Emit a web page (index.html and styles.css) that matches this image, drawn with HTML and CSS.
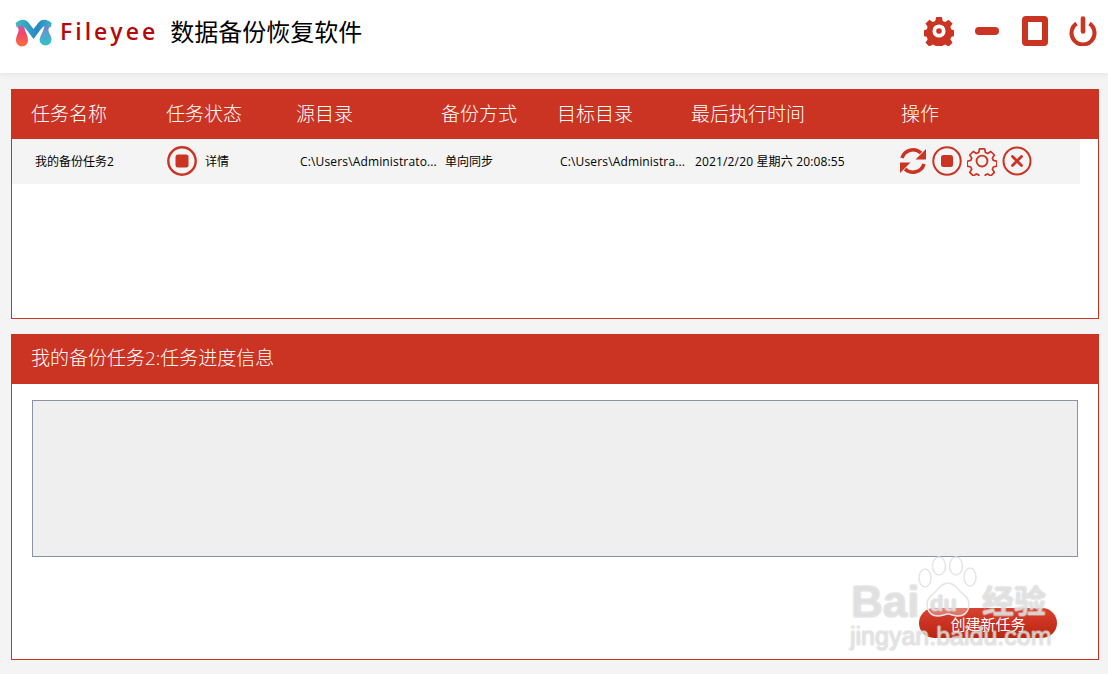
FILE: index.html
```html
<!DOCTYPE html>
<html lang="zh-CN">
<head>
<meta charset="utf-8">
<title>Fileyee 数据备份恢复软件</title>
<link rel="stylesheet" href="styles.css">
</head>
<body>
<header class="topbar">
  <div class="brand">
    <svg class="logo" width="38" height="29" viewBox="0 0 38 29">
      <defs>
        <linearGradient id="lg1" x1="0" y1="0" x2="0" y2="1"><stop offset="0" stop-color="#c85bc0"/><stop offset=".5" stop-color="#f0466e"/><stop offset="1" stop-color="#fd7035"/></linearGradient>
        <linearGradient id="lg2" x1="0" y1="0" x2="0" y2="1"><stop offset="0" stop-color="#9a62c8"/><stop offset=".45" stop-color="#5f9ad0"/><stop offset="1" stop-color="#2cc6c2"/></linearGradient>
        <linearGradient id="lg3" x1="0" y1="0" x2="1" y2="0"><stop offset="0" stop-color="#38c0c4"/><stop offset=".6" stop-color="#2a86c4"/><stop offset="1" stop-color="#3db5c8"/></linearGradient>
      </defs>
      <path d="M.5 5 6 3 9.500 10C10 14 13 17 13 22.500A6 6 0 0 1 1 22.500C1 17 4 15 3.500 11Z" fill="url(#lg1)"/>
      <path d="M36.500 5 31 3 29 10C28 14 25.500 17 24.500 21.500A6 6 0 0 0 36.500 21.500C36.500 17 33 15 33.500 11Z" fill="url(#lg2)"/>
      <path d="M1 5C5 1 10 1 13 4L18.500 11 24 4C27 1 32 1 36.500 5L36 9.500C32 6.500 29 7.500 26 11L18.500 21 11 11C8 7.500 5 6.500 1.500 9.500Z" fill="url(#lg3)"/>
    </svg>
    <span class="brand-name">Fileyee</span>
    <h1 class="brand-title">数据备份恢复软件</h1>
  </div>
  <div class="win-actions">
    <svg class="win-icon" width="30" height="30" viewBox="0 0 32 32"><path fill="#cb3322" fill-rule="evenodd" d="M13 1h6l1 4.200 2.600 1.100 3.700-2.300 4.100 4.100-2.300 3.700 1.100 2.600 4.200 1v5.800l-4.200 1-1.100 2.600 2.300 3.700-4.100 4.100-3.700-2.300-2.600 1.100-1 4.200h-6l-1-4.200-2.600-1.100-3.700 2.300-4.100-4.100 2.300-3.700-1.100-2.600-4.200-1v-5.800l4.200-1 1.100-2.600-2.300-3.700 4.100-4.100 3.700 2.300L12 5.200zM16 9a7 7 0 1 0 0 14 7 7 0 0 0 0-14zM16 13a3 3 0 1 1 0 6 3 3 0 0 1 0-6z"/></svg>
    <span class="win-min"></span>
    <span class="win-max"></span>
    <svg class="win-icon" width="28" height="30" viewBox="0 0 28 30"><path d="M7.500 7.500A11.500 11.500 0 1 0 20.500 7.500" fill="none" stroke="#cb3322" stroke-width="4"/><path d="M14 2.500v13" stroke="#cb3322" stroke-width="4.600" stroke-linecap="round"/></svg>
  </div>
</header>

<main class="content">
  <section class="panel panel-tasks">
    <div class="grid-row panel-head table-head">
      <div>任务名称</div><div>任务状态</div><div>源目录</div><div>备份方式</div><div>目标目录</div><div>最后执行时间</div><div>操作</div>
    </div>
    <div class="grid-row task-row">
      <div class="cell">我的备份任务2</div>
      <div class="cell status">
        <svg width="30" height="30" viewBox="0 0 30 30"><circle cx="15" cy="15" r="13.700" fill="none" stroke="#cb3322" stroke-width="2.400"/><rect x="8.500" y="8.500" width="13" height="13" rx="2.500" fill="#cb3322"/></svg>
        <span>详情</span>
      </div>
      <div class="cell clip wide">C:\Users\Administrato...</div>
      <div class="cell">单向同步</div>
      <div class="cell clip wide">C:\Users\Administra...</div>
      <div class="cell wide">2021/2/20 星期六 20:08:55</div>
      <div class="cell ops">
        <svg width="28" height="30" viewBox="0 0 28 30"><path d="M3 12 A11.500 11.500 0 0 1 22 7" fill="none" stroke="#cb3322" stroke-width="3.600"/><path d="M27 3v10.500H16.500z" fill="#cb3322"/><path d="M25 18 A11.500 11.500 0 0 1 6 23" fill="none" stroke="#cb3322" stroke-width="3.600"/><path d="M1 27V16.500h10.500z" fill="#cb3322"/></svg>
        <svg width="30" height="30" viewBox="0 0 30 30"><circle cx="15" cy="15" r="13.700" fill="none" stroke="#cb3322" stroke-width="2"/><rect x="9" y="9" width="12" height="12" rx="2.500" fill="#cb3322"/></svg>
        <svg width="30" height="30" viewBox="0 0 32 32"><path fill="none" stroke="#cb3322" stroke-width="2" stroke-linejoin="round" d="M13 2h6l1 4.200 2.600 1.100 3.700-2.300 4.100 4.100-2.300 3.700 1.100 2.600 4.200 1v5.800l-4.200 1-1.100 2.600 2.300 3.700-4.100 4.100-3.700-2.300-2.600 1.100-1 4.200h-6l-1-4.200-2.600-1.100-3.700 2.300-4.100-4.100 2.300-3.700-1.100-2.600-4.200-1v-5.800l4.200-1 1.100-2.600-2.300-3.700 4.100-4.100 3.700 2.300L12 6.200z" transform="translate(1.500 1.300) scale(.91)"/><circle cx="16" cy="16" r="5.800" fill="none" stroke="#cb3322" stroke-width="2"/></svg>
        <svg width="30" height="30" viewBox="0 0 30 30"><circle cx="15" cy="15" r="13.500" fill="none" stroke="#cb3322" stroke-width="2"/><path d="M10.500 10.500l9 9M19.500 10.500l-9 9" stroke="#cb3322" stroke-width="2.800" stroke-linecap="round"/></svg>
      </div>
    </div>
  </section>

  <section class="panel panel-progress">
    <div class="panel-head progress-head">我的备份任务2:任务进度信息</div>
    <div class="progress-body">
      <div class="log-box"></div>
      <div class="actions"><button class="create-btn" type="button">创建新任务</button></div>
    </div>
  </section>
</main>

<div class="watermark" aria-hidden="true">
  <svg class="paw" width="62" height="66" viewBox="0 0 62 66">
    <g fill="rgba(255,255,255,.3)" stroke="#e6e6e6" stroke-width="1.600">
      <ellipse cx="8" cy="22" rx="6" ry="9"/><ellipse cx="22" cy="10" rx="6.500" ry="9"/><ellipse cx="39" cy="10" rx="6.500" ry="9"/><ellipse cx="53" cy="21" rx="6" ry="9"/>
      <path d="M31 27C24 27 21 34 15 39C6 46 10 60 21 60C25 60 28 58 31 58C34 58 37 60 41 60C52 60 56 46 47 39C41 34 38 27 31 27Z"/>
    </g>
  </svg>
  <span class="wm-bai">Bai</span><span class="wm-du">du</span><span class="wm-jy">经验</span>
  <span class="wm-url">jingyan.baidu.com</span>
</div>
</body>
</html>
```

FILE: styles.css
```css
* { box-sizing: border-box; }
html, body { margin: 0; padding: 0; }
body {
  width: 1108px;
  height: 674px;
  overflow: hidden;
  position: relative;
  background: #f4f4f4;
  font-family: "Open Sans", "Noto Sans CJK SC", sans-serif;
  color: #000;
}
.topbar {
  height: 73px;
  background: #fff;
  box-shadow: 0 1px 6px rgba(0,0,0,.08);
  display: flex;
  align-items: flex-start;
  justify-content: space-between;
  padding: 16px 11px 0 15px;
}
.brand { display: flex; align-items: center; height: 30px; }
.logo { display: block; margin-top: 2px; }
.brand-name {
  margin-left: 7px;
  font-family: "Open Sans", "Noto Sans", sans-serif;
  font-weight: 600;
  font-size: 23px;
  letter-spacing: 3px;
  color: #b4090d;
  line-height: 30px;
}
.brand-title {
  margin: 0 0 0 12px;
  font-size: 24px;
  font-weight: 400;
  line-height: 32px;
  white-space: nowrap;
  font-family: "Noto Sans CJK SC", sans-serif;
}
.win-actions { display: flex; align-items: center; height: 30px; }
.win-icon { display: block; flex: none; }
.win-min {
  width: 24px; height: 8px; margin-left: 21px;
  background: #cb3322; border-radius: 4px;
}
.win-max {
  width: 26px; height: 30px; margin-left: 23px; margin-right: 21px;
  border: 6px solid #cb3322; border-radius: 4px;
}
.content {
  padding: 16px 9px 0 11px;
  display: flex;
  flex-direction: column;
  gap: 15px;
}
.panel {
  width: 1088px;
  background: #fff;
  border: 1px solid #cb3322;
}
.panel-tasks { height: 230px; }
.panel-progress { height: 326px; }
.grid-row {
  display: grid;
  grid-template-columns: 135px 130px 145px 116px 134px 210px 1fr;
  padding-left: 19px;
  align-items: center;
}
.panel-head {
  height: 50px;
  margin: -1px -1px 0;
  background: #cb3322;
  color: #fff;
  font-size: 19px;
  font-weight: 300;
  line-height: 49px;
  white-space: nowrap;
}
.table-head { padding-left: 20px; }
.progress-head { padding-left: 20px; }
.task-row {
  height: 45px;
  width: 1068px;
  padding-bottom: 1px;
  background: #f4f4f4;
  font-size: 12px;
  white-space: nowrap;
  grid-template-columns: 135px 130px 145px 115px 135px 209px 1fr;
}
.cell { padding-left: 4px; }
.wide { letter-spacing: .15px; }
.clip { overflow: hidden; }
.status { display: flex; align-items: center; gap: 8px; padding-left: 1px; }
.status svg, .ops svg { display: block; flex: none; }
.ops { display: flex; align-items: center; gap: 5px; padding-left: 0; margin-left: -1px; }
.progress-body { padding: 16px 20px 0; }
.log-box {
  height: 157px;
  background: #efefef;
  border: 1px solid #8b92a3;
}
.actions { display: flex; justify-content: flex-end; margin-top: 51px; padding-right: 21px; }
.create-btn {
  width: 138px;
  height: 30px;
  border: 0;
  padding: 0;
  border-radius: 15px;
  background: linear-gradient(#d8432f, #cb3322 45%, #b8280f);
  color: #fff;
  font-family: "Noto Sans CJK SC", sans-serif;
  font-size: 15px;
}
.watermark {
  position: absolute;
  left: 850px;
  top: 556px;
  width: 210px;
  height: 100px;
  pointer-events: none;
}
.watermark span {
  position: absolute;
  line-height: 1;
  white-space: nowrap;
  font-family: "Liberation Sans", sans-serif;
  font-weight: 700;
  color: rgba(255,255,255,.3);
  text-shadow: 1px 0 0 rgba(210,210,210,.45), -1px 0 0 rgba(210,210,210,.45), 0 1px 0 rgba(210,210,210,.45), 0 -1px 0 rgba(210,210,210,.45);
}
.paw { position: absolute; left: 67px; top: 0; }
.wm-bai { left: 1px; top: 24px; font-size: 44px; }
.wm-du { left: 80px; top: 37px; font-size: 22px; }
.wm-jy { left: 132px; top: 27px; font-size: 32px; font-family: "Noto Sans CJK SC", sans-serif !important; }
.wm-url { left: 0; top: 68px; font-size: 25px; font-weight: 400 !important; }
```
